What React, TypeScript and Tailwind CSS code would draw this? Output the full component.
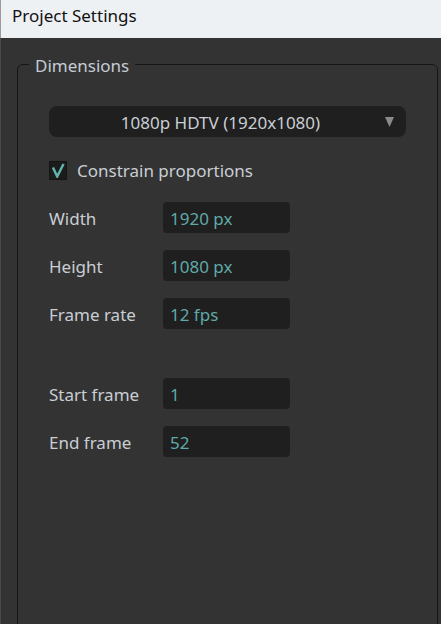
import React from "react";

function Field({ label, value }: { label: string; value: string }) {
  return (
    <div className="flex items-center h-[31px]">
      <div className="w-[114px] text-[17px] leading-[24px] pt-[3px] text-[#c9ced4]">{label}</div>
      <div className="w-[127px] h-[31px] rounded-[4px] bg-[#1f1f1f] pl-[7px] pt-[3px] flex items-center text-[17px] text-[#5fa9a8]">
        {value}
      </div>
    </div>
  );
}

export default function App() {
  return (
    <div className="w-[441px] h-[624px] overflow-hidden flex flex-col font-['Noto_Sans',sans-serif]">
      <div className="h-[38px] shrink-0 bg-[#eef1f4] border-l border-[#9a9a9a] pl-[11px] pb-[6px] flex items-center text-[17px] text-[#111]">
        Project Settings
      </div>
      <div className="flex-1 bg-[#333333] border-l border-[#4a4a4a] pl-[16px] pr-[3px] pt-[15px]">
        <fieldset className="border border-[#161616] rounded-[6px] p-0 h-[620px] m-0">
          <legend className="ml-[11px] px-[6px] text-[17px] leading-[22px] text-[#c5ccd4]">
            <span className="relative top-[2px]">Dimensions</span>
          </legend>
          <div className="pl-[31px] pr-[31px] pt-[31px] flex flex-col">
            <div className="h-[31px] rounded-[8px] bg-[#1f1f1f] flex items-center relative">
              <div className="flex-1 text-center text-[17px] text-[#c9ced4] pr-[14px] pt-[2px]">1080p HDTV (1920x1080)</div>
              <svg className="absolute right-[12px] top-[11px]" width="9" height="10" viewBox="0 0 9 10">
                <polygon points="0,0 9,0 4.5,10" fill="#8a8a8a" />
              </svg>
            </div>
            <div className="flex items-center mt-[23px] h-[20px]">
              <div className="w-[18px] h-[19px] bg-[#1c1c1c] border border-[#151515] flex items-center justify-center">
                <svg width="14" height="15" viewBox="0 0 14 15">
                  <path d="M2 4.5 L6.2 13.5 L12.5 1" stroke="#63b6b0" strokeWidth="2.4" fill="none" strokeLinejoin="miter" />
                </svg>
              </div>
              <div className="ml-[10px] text-[17px] text-[#c9ced4] pt-[2px]">Constrain proportions</div>
            </div>
            <div className="mt-[22px] flex flex-col gap-[17px]">
              <Field label="Width" value="1920 px" />
              <Field label="Height" value="1080 px" />
              <Field label="Frame rate" value="12 fps" />
            </div>
            <div className="mt-[49px] flex flex-col gap-[17px]">
              <Field label="Start frame" value="1" />
              <Field label="End frame" value="52" />
            </div>
          </div>
        </fieldset>
      </div>
    </div>
  );
}
